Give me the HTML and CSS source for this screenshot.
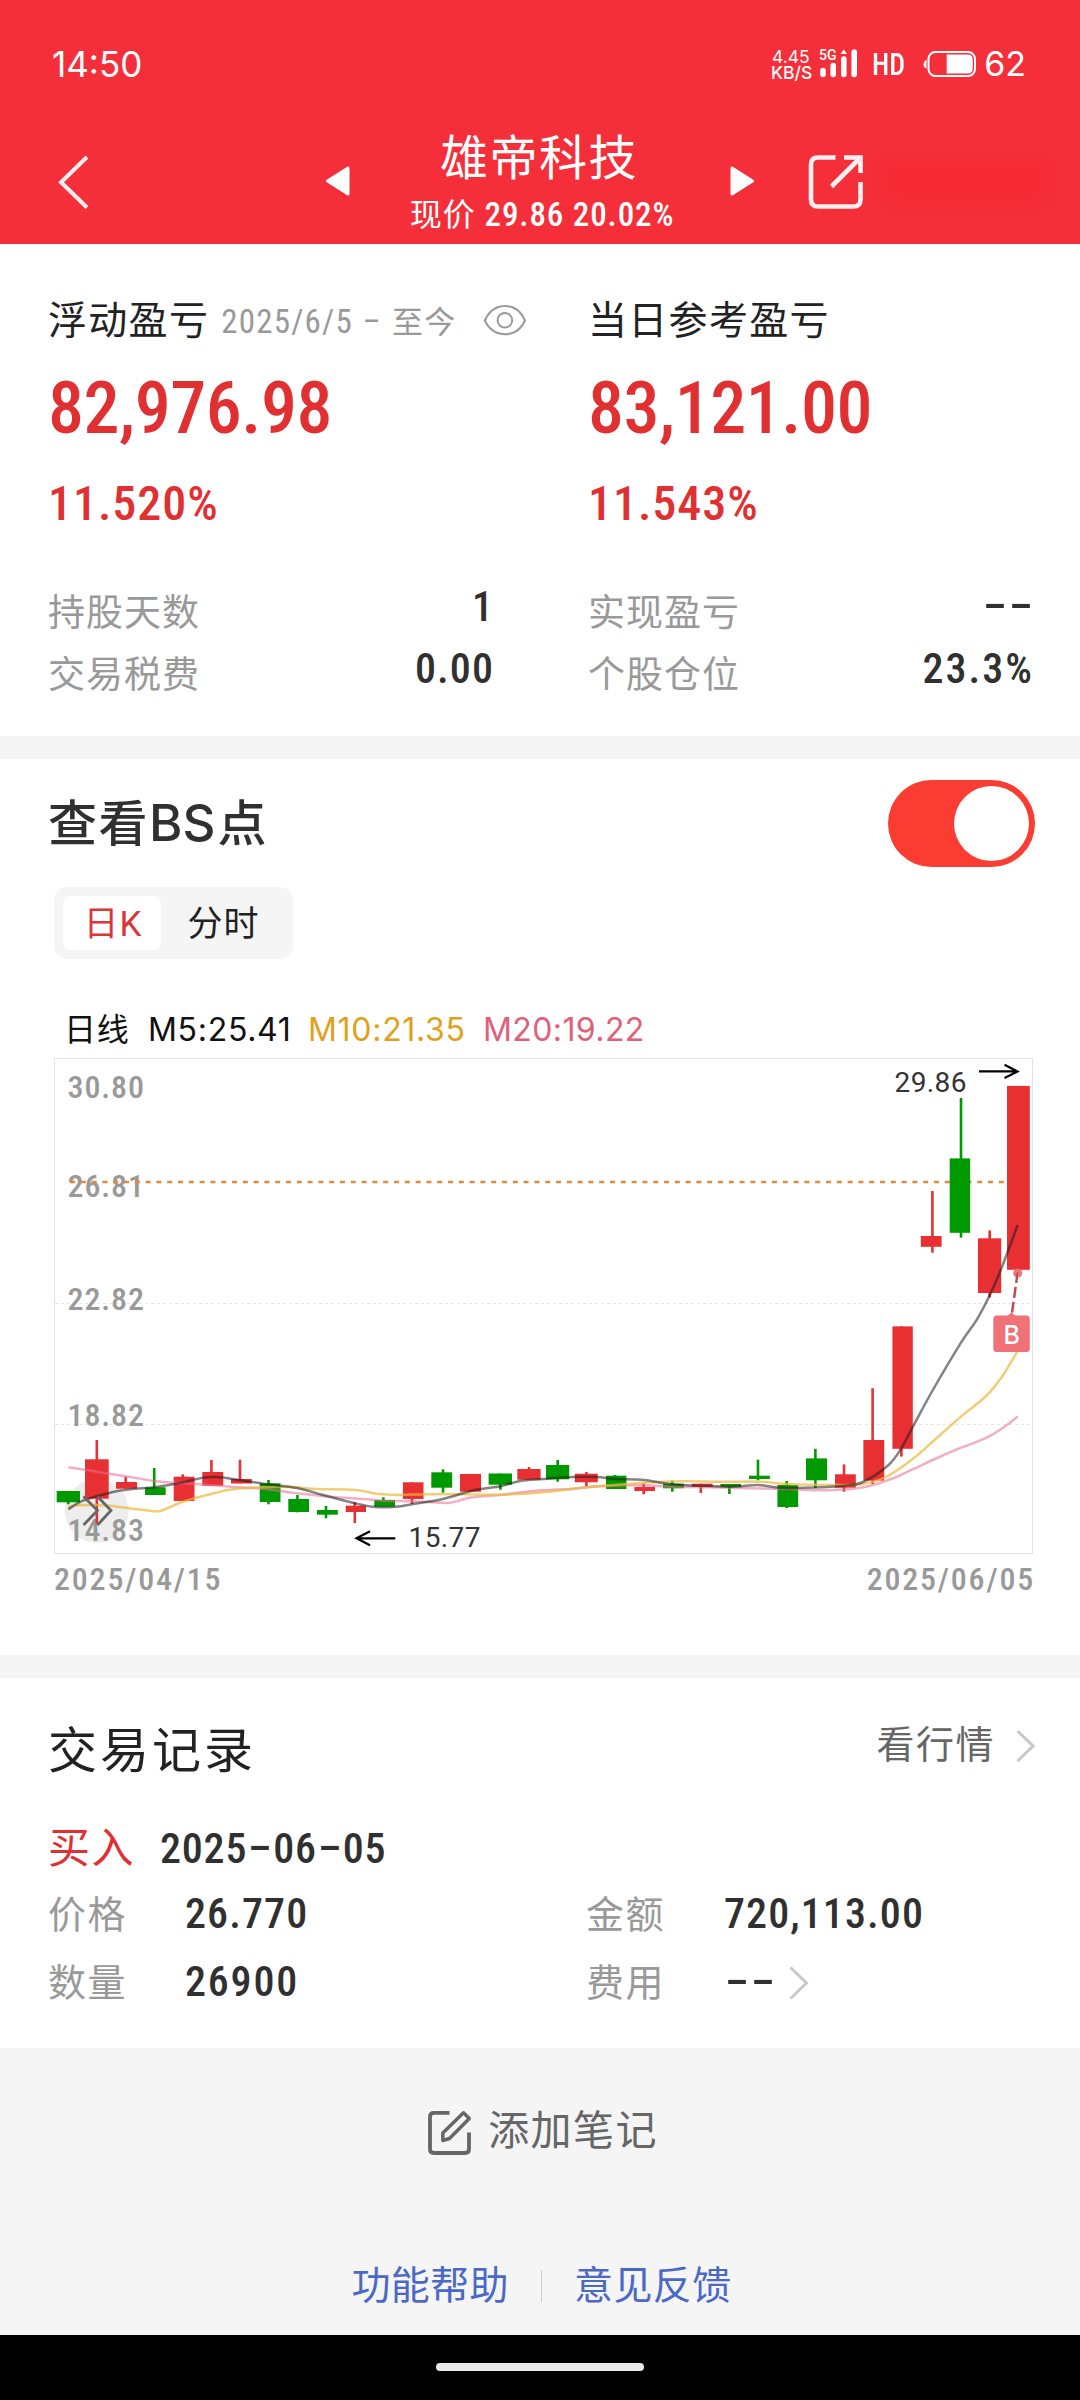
FILE: index.html
```
<!DOCTYPE html>
<html lang="zh-CN">
<head>
<meta charset="utf-8">
<title>雄帝科技</title>
<link rel="stylesheet" href="styles.css">
</head>
<body>
<header class="header">
  <div class="status">
    <span class="clock">14:50</span>
    <div class="status-icons">
      <div class="speed"><span>4.45</span><span class="unit">KB/S</span></div>
      <svg class="signal" width="40" height="32" viewBox="822 48 40 32">
        <text x="823" y="59.5" class="net">5G</text>
        <g stroke="#fff" stroke-width="5.6" stroke-linecap="round">
          <path d="M827 70.5v4M837.2 65.5v9M847.8 59v15.500M858.200 52v22.500"/>
        </g>
        <path d="M844.500 54l3.300-4.500 3.300 4.500z" fill="#fff"/>
      </svg>
      <span class="hd">HD</span>
      <svg class="battery" width="54" height="28" viewBox="925 49 54 28">
        <path d="M928.500 59.500v8q-3-1-3-4t3-5z" fill="#fff"/>
        <rect x="930.500" y="51" width="46.500" height="24" rx="7" fill="none" stroke="#fff" stroke-width="2"/>
        <path d="M948.700 53.500h21q5 0 5 5v9q0 5-5 5h-21z" fill="#fff"/>
      </svg>
      <span class="level">62</span>
    </div>
  </div>
  <nav class="nav">
    <svg class="back" width="32" height="56" viewBox="58 154 32 56"><path d="M87 157L61 182.200L87 207.500" fill="none" stroke="#fff" stroke-opacity=".92" stroke-width="4"/></svg>
    <svg class="arrow" width="24" height="30" viewBox="0 0 24 30"><path d="M1.500 15L22 2v26z" fill="#fff" stroke="#fff" stroke-width="3" stroke-linejoin="round"/></svg>
    <div class="heading">
      <h1>雄帝科技</h1>
      <p><span class="cap">现价</span> 29.86 20.02%</p>
    </div>
    <svg class="arrow" width="24" height="30" viewBox="0 0 24 30"><path d="M22.500 15L2 2v26z" fill="#fff" stroke="#fff" stroke-width="3" stroke-linejoin="round"/></svg>
    <svg class="share" width="56" height="56" viewBox="808 154 56 56"><g fill="none" stroke="#fff" stroke-opacity=".92" stroke-width="4.600">
      <path d="M835.500 157.500H818q-7 0-7 7V199.500q0 7 7 7H853.500q7 0 7-7V182"/>
      <path d="M844 157.500H860.500V173M860 158L831.500 186.500"/></g></svg>
    <span class="smudge"></span>
  </nav>
</header>

<section class="summary">
  <div class="col">
    <div class="label-row">
      <h2>浮动盈亏</h2>
      <span class="range">2025/6/5<span class="dash">-</span><span class="cap">至今</span></span>
      <svg class="eye" width="44" height="32" viewBox="483 303 44 32"><g fill="none" stroke="#999" stroke-width="2"><path d="M484.800 319.500Q489 310 497 306.500Q505 303.500 513 306.500Q521 310 525 319.500Q521 328.500 513 331.800Q505 334.500 497 331.800Q489 328.500 484.800 319.500Z"/><circle cx="504.900" cy="319.300" r="7.300"/></g></svg>
    </div>
    <div class="big">82,976.98</div>
    <div class="pct">11.520%</div>
    <dl class="kv">
      <dt>持股天数</dt><dd>1</dd>
      <dt>交易税费</dt><dd>0.00</dd>
    </dl>
  </div>
  <div class="col">
    <div class="label-row"><h2>当日参考盈亏</h2></div>
    <div class="big">83,121.00</div>
    <div class="pct">11.543%</div>
    <dl class="kv">
      <dt>实现盈亏</dt><dd><span class="dash">-</span><span class="dash">-</span></dd>
      <dt>个股仓位</dt><dd class="wide">23.3%</dd>
    </dl>
  </div>
</section>

<section class="chart-card">
  <div class="card-head">
    <h2>查看<span class="latin">BS</span>点</h2>
    <span class="toggle"><i></i></span>
  </div>
  <div class="tabs"><span class="tab active">日K</span><span class="tab">分时</span></div>
  <div class="legend"><span class="kind">日线</span><span class="m5">M5:25.41</span><span class="m10">M10:21.35</span><span class="m20">M20:19.22</span></div>
  <svg class="chart" width="980" height="497" viewBox="54 1058 980 497">
    <rect x="54.500" y="1058.500" width="978" height="495" fill="none" stroke="#e4e4e6"/>
    <path d="M55 1303.500H1032M55 1424.500H1032" stroke="#e6e6e6" stroke-dasharray="3 3"/>
    <circle cx="96.700" cy="1511" r="32" fill="#ededed"/>
    <g class="axis">
      <text x="67.500" y="1098">30.80</text><text x="67.500" y="1196.500">26.81</text><text x="67.500" y="1310">22.82</text><text x="67.500" y="1425.500">18.82</text><text x="67.500" y="1540.500">14.83</text>
    </g>
    <path d="M70 1182H1010" stroke="#dd8a3c" stroke-width="2.400" stroke-dasharray="5 5.800"/>
    <g id="candles"></g>
    <g fill="none" stroke-width="2.500">
      <path class="ma20" id="ma20"/>
      <path class="ma10" id="ma10"/>
      <path class="ma5" id="ma5"/>
    </g>
    <path d="M83.500 1496.500L97.500 1510.500L83.500 1525M97.500 1496.500L111 1510.500L97.500 1525" fill="none" stroke="#666" stroke-width="2.800"/>
    <g fill="none" stroke="#000" stroke-width="2.200">
      <path d="M979 1071.400H1017M1004.500 1064.800L1017.500 1071.400L1004.500 1078"/>
      <path d="M395.300 1538.300H357M370 1531.300L356.500 1538.300L370 1545.300"/>
    </g>
    <text class="mark" x="894.500" y="1092">29.86</text>
    <text class="mark" x="408.500" y="1546.500">15.77</text>
    <circle cx="1017.700" cy="1273" r="4.500" fill="#f07176"/>
    <path d="M1017.700 1272L1012 1313" stroke="#fff" stroke-width="2.500"/>
    <path d="M1017.700 1272L1012 1313" stroke="#c9474f" stroke-width="2.500" stroke-dasharray="11 4"/>
    <path d="M1006 1317l5.500-4.500 5.500 4.500z" fill="#f07176"/>
    <rect x="993.300" y="1315.600" width="36.500" height="36.400" rx="3.500" fill="#f07176"/>
    <text class="b-mark" x="1011.800" y="1343.500">B</text>
  </svg>
  <div class="dates"><span>2025/04/15</span><span>2025/06/05</span></div>
</section>

<section class="records">
  <div class="card-head">
    <h2>交易记录</h2>
    <a class="more">看行情<svg width="19" height="32" viewBox="0 0 19 32"><path d="M1.500 1L17 16L1.500 31" fill="none" stroke="#c8c8c8" stroke-width="3"/></svg></a>
  </div>
  <div class="trade"><span class="side">买入</span><span class="num day">2025<span class="dash">-</span>06<span class="dash">-</span>05</span></div>
  <div class="fields">
    <span class="name">价格</span><span class="num">26.770</span>
    <span class="name">金额</span><span class="num">720,113.00</span>
    <span class="name">数量</span><span class="num qty">26900</span>
    <span class="name">费用</span><span class="num fee"><span class="dash">-</span><span class="dash">-</span><svg width="20" height="34" viewBox="0 0 20 34"><path d="M1.500 1.500L17.500 17L1.500 32.500" fill="none" stroke="#c8c8c8" stroke-width="3"/></svg></span>
  </div>
</section>

<footer class="footer">
  <a class="note"><svg width="44" height="46" viewBox="428 2110 44 46"><g fill="none" stroke="#666" stroke-width="3.800"><path d="M449.500 2112.800H434q-4 0-4 4V2149q0 4 4 4H465q4 0 4-4V2132.500"/><path d="M442.800 2140.500V2133L463.500 2112.800L469.300 2118.500L449.500 2138.500Z" stroke-width="3.400" stroke-linejoin="round"/></g></svg>添加笔记</a>
  <div class="links"><a>功能帮助</a><i></i><a>意见反馈</a></div>
</footer>
<div class="gesture"><i></i></div>
<script src="chart.js"></script>
</body>
</html>
```
FILE: chart.js
```
// Each candle: body left, right, top, bottom, wick x, wick top, wick bottom, colour
const R = '#e83033', G = '#009a00';
const candles = [
  [56.7,80,1491,1502.3,68.3,1491,1504.3,G],[85,108.7,1459.3,1498.7,96.8,1440,1523.3,R],
  [116,137,1482,1488.7,125.7,1476.7,1488.7,R],[145,165.7,1487.3,1495,154.2,1468,1495,G],
  [173.7,194.5,1476.7,1501,182.8,1474.3,1501,R],[202.3,223.2,1472,1485.7,211.4,1460,1485.7,R],
  [231,251.8,1479,1483.5,240,1459.7,1483.5,R],[259.7,280.5,1483.3,1502,268.5,1480,1504.3,G],
  [288.3,309,1499,1512,297.4,1495,1512.3,G],[317,337.8,1510,1514.7,326,1506,1518.3,G],
  [345.7,366,1505.7,1512,354.8,1502.3,1523,R],[374.3,395,1500,1506.7,383.4,1497.3,1506.7,G],
  [402.9,423.5,1482.3,1499,412,1482.3,1504,R],[431.3,452.2,1472.3,1487.7,443,1469.3,1492.7,G],
  [460,481,1474,1491.7,470,1474,1491.7,R],[488.6,512,1473.5,1484.7,500.4,1473.5,1489.7,G],
  [517.3,540.6,1469,1479.7,529,1467,1479.7,R],[546,569.2,1465,1479.3,557.7,1460,1481.7,G],
  [574.8,597.8,1473.7,1482.3,586.4,1472,1486,R],[606,626.4,1475.7,1489,615,1475,1489,G],
  [634.4,655,1487,1491,643.7,1483.3,1494.3,R],[663,683.8,1483.7,1488.3,672.3,1480.7,1491.7,G],
  [691.8,712.6,1483.7,1487,700.8,1483.7,1493,R],[720.4,741,1484,1487,729.4,1484,1494,G],
  [749,769.8,1475.7,1479,758,1459.7,1480.3,G],[777.4,798.2,1485,1507,786.7,1481,1508,G],
  [806,827,1458.4,1480.3,815.4,1448.8,1488,G],[835,855.8,1474.3,1487.7,844,1464.4,1491.7,R],
  [863.4,884.2,1440,1480.6,872.6,1388.2,1484,R],[892.4,912.8,1326.4,1448.8,901.4,1326.4,1456.6,R],
  [920.8,941.6,1236,1246.8,932.4,1191,1252.7,R],[949.7,970.2,1158.4,1232.8,961,1098,1237.6,G],
  [978,1001.2,1238.3,1293,989.7,1230.5,1297.5,R],[1007,1029.8,1085.9,1269.8,1017.7,1085.9,1273,R]
];
document.getElementById('candles').innerHTML = candles.map(([l, r, t, b, x, wt, wb, c]) =>
  `<rect x="${l}" y="${t}" width="${r - l}" height="${b - t}" fill="${c}"/><path d="M${x} ${wt}V${wb}" stroke="${c}" stroke-width="2.6"/>`).join('');

// Moving averages, smoothed with Catmull-Rom segments
const averages = {
  ma5: [[68.3,1509.3],[83,1500.7],[110,1492.7],[130,1489.3],[154,1487.3],[173,1484.3],[190,1480.7],[203,1477.7],[217,1477],[237,1479.7],[263,1483.7],[280,1485.7],[300,1488.7],[323,1495],[355,1503.3],[373,1506.7],[393,1507],[412,1504.3],[443,1499],[472,1490.7],[500,1486.3],[520,1481],[543,1479],[573,1477],[597,1477],[615,1479],[644,1480],[672,1484.3],[701,1485.7],[733,1486.7],[758,1485],[780,1487.7],[815,1487.6],[844,1485.8],[863,1482],[888,1465.5],[901,1448.8],[913,1426.6],[932,1391.5],[961,1342.6],[977,1319.3],[989.7,1295.3],[1001,1269.4],[1017.7,1225]],
  ma10: [[68.3,1506.7],[80,1505.3],[103,1505.3],[127,1508],[154,1511.3],[163,1510],[183,1501.7],[211,1494],[233,1489.3],[263,1487.3],[290,1487],[317,1489],[355,1490],[377,1493.7],[397,1495],[412,1494.6],[443,1494],[500,1494.7],[543,1492.3],[587,1487.3],[615,1485],[653,1482.3],[683,1481.3],[720,1481.7],[760,1481.7],[787,1484],[844,1485],[863,1484],[887,1476.5],[913,1458.8],[937,1437.7],[961,1416.6],[985,1397],[1002,1376.7],[1017.7,1350.8]],
  ma20: [[68.3,1467.3],[97,1471.7],[130,1477],[163,1482],[197,1484],[230,1486.7],[263,1488.7],[297,1493.3],[330,1496.7],[363,1499],[383,1500.7],[412,1501.3],[430,1502],[450,1502.7],[472,1497.3],[500,1495],[533,1491],[573,1488.7],[600,1486.3],[644,1485.3],[672,1486.7],[729,1487.7],[787,1489.1],[815,1490.2],[844,1489.5],[867,1486.5],[890,1479.5],[913,1469.2],[937,1458],[961,1447.7],[985,1438.4],[1002,1428.5],[1017.7,1416.6]]
};
for (const [id, p] of Object.entries(averages)) {
  let d = `M${p[0]}`;
  for (let i = 0; i < p.length - 1; i++) {
    const a = p[i - 1] || p[i], b = p[i], c = p[i + 1], e = p[i + 2] || c;
    d += `C${b[0] + (c[0] - a[0]) / 6} ${b[1] + (c[1] - a[1]) / 6} ${c[0] - (e[0] - b[0]) / 6} ${c[1] - (e[1] - b[1]) / 6} ${c[0]} ${c[1]}`;
  }
  document.getElementById(id).setAttribute('d', d);
}
```
FILE: styles.css
```
* { box-sizing: border-box; margin: 0; padding: 0; }
body { width: 1080px; background: #fff; color: #222; font-family: Roboto, "Noto Sans CJK SC", sans-serif; }
h1, h2 { font-weight: 400; }
i { display: block; }
svg { display: block; flex: none; }

.header { height: 244px; background: #f42f39; color: #fff; }
.status { display: flex; justify-content: space-between; height: 129px; padding: 44px 54px 0 52px; }
.clock, .level, .speed { font-family: Inter, sans-serif; }
.clock { font-size: 35px; line-height: 40px; }
.status-icons { display: flex; height: 40px; align-items: center; width: 255px; }
.speed { display: flex; flex-direction: column; width: 52px; padding: 1px 0 0 1px; font-size: 17.5px; line-height: 15.5px; }
.speed .unit { margin-left: -1px; font-size: 17.5px; font-weight: 500; }
.net { font: 500 14px Roboto, sans-serif; fill: #fff; }
.hd { width: 31px; margin-left: 14px; font-size: 32px; line-height: 40px; font-weight: 500; font-stretch: 75%; transform: scaleX(.87); transform-origin: 0 50%; white-space: nowrap; }
.battery { margin-left: 20px; }
.level { margin-left: 7px; font-size: 34px; line-height: 40px; }

.nav { display: grid; grid-template-columns: 268px 24px 380px 24px 56px 1fr; height: 115px; padding-left: 58px; align-items: start; }
.back { margin-top: 25px; }
.arrow { margin-top: 37px; }
.share { margin: 25px 0 0 54px; }
.heading { text-align: center; }
.heading h1 { font-size: 48px; line-height: 60px; letter-spacing: 1.5px; padding-right: 2px; }
.heading p { margin-top: 6px; padding-left: 4px; font-size: 33px; line-height: 40px; font-weight: 500; font-stretch: 75%; letter-spacing: .9px; }
.heading .cap { font-weight: 400; font-size: 32px; line-height: 1; letter-spacing: 1.2px; }
.smudge { width: 165px; height: 38px; margin: 34px 0 0 72px; border-radius: 19px; background: #f8222e; opacity: .45; filter: blur(8px); }

.summary { display: grid; grid-template-columns: 540px 540px; height: 492px; padding-top: 52px; }
.col { padding-left: 48px; }
.label-row { display: flex; align-items: center; width: 479px; height: 50px; }
.label-row h2 { font-size: 39px; line-height: 50px; letter-spacing: 1.3px; }
.range { margin: 2px 0 0 12px; color: #999; font-size: 33px; line-height: 50px; font-stretch: 75%; letter-spacing: 1.2px; white-space: nowrap; }
.range .dash { width: 21px; margin: 0 10px 0 8px; }
.range .cap { font-size: 31px; line-height: 1; }
.eye { margin: -3px 0 0 auto; }
.big { margin-top: 23px; color: #e03032; font-size: 72px; line-height: 80px; font-weight: 500; font-stretch: 75%; letter-spacing: -.45px; }
.pct { margin-top: 25px; color: #e03032; font-size: 48px; line-height: 60px; font-weight: 500; font-stretch: 75%; letter-spacing: 1px; }
.dash { display: inline-block; width: 26px; text-align: center; letter-spacing: 0; transform: translateY(-2px) scaleX(1.9); }
.kv { display: grid; grid-template-columns: 1fr auto; width: 446px; margin-top: 49px; grid-auto-rows: 62px; line-height: 62px; }
.kv dt { color: #999; font-size: 37px; letter-spacing: 1px; }
.kv dd, .num { color: #303030; font-size: 42px; font-weight: 500; font-stretch: 75%; letter-spacing: 1.1px; }
.kv dd { margin-top: -7px; text-align: right; }
.kv dd.wide { letter-spacing: 2px; }

.chart-card { height: 919px; border-top: 23px solid #f5f5f5; padding: 21px 45px 0 48px; }
.card-head { display: flex; justify-content: space-between; }
.chart-card .card-head { height: 87px; }
.chart-card h2 { color: #303030; font-size: 49px; line-height: 90px; font-weight: 500; letter-spacing: 1.5px; }
.latin { padding-right: 2px; font-family: Inter, sans-serif; font-size: 51px; line-height: 1; letter-spacing: 0; }
.toggle { width: 147px; height: 87px; padding: 6px; border-radius: 44px; background: #fb3c32; }
.toggle i { width: 75px; height: 75px; margin-left: auto; border-radius: 50%; background: #fff; }
.tabs { display: flex; width: 239px; height: 72px; margin: 20px 0 0 6px; padding: 9px; border-radius: 13px; background: #f5f5f5; }
.tab { width: 99px; height: 54px; border-radius: 8px; font-size: 35px; line-height: 58px; letter-spacing: 1px; text-align: center; }
.tab + .tab { width: 124px; padding-left: 2px; }
.tab.active { padding-left: 2px; background: #fff; color: #d9363a; }
.legend { display: flex; height: 40px; margin: 50px 0 0 16px; font-family: Inter, "Noto Sans CJK SC", sans-serif; font-size: 32px; line-height: 42px; letter-spacing: .7px; color: #111; white-space: nowrap; }
.legend .kind { width: 84px; }
.legend .m5 { width: 160px; }
.legend .m10 { width: 175px; color: #dfa11c; }
.legend .m20 { color: #e0607c; letter-spacing: .4px; }
.chart { margin: 9px 0 0 6px; }
.axis { font: 500 32px Roboto, sans-serif; font-stretch: 75%; letter-spacing: .9px; fill: #999; }
.mark { font: 400 28px Roboto, sans-serif; letter-spacing: .4px; fill: #333; }
.b-mark { font: 500 25px Inter, sans-serif; fill: #fff; text-anchor: middle; }
.ma5 { stroke: rgba(30, 30, 30, .55); }
.ma10 { stroke: rgba(236, 184, 60, .7); }
.ma20 { stroke: rgba(232, 110, 145, .55); }
.dates { display: flex; justify-content: space-between; margin: 9px 0 0 6px; color: #999; font-size: 32px; line-height: 30px; font-weight: 500; font-stretch: 75%; letter-spacing: 1.8px; }

.records { height: 393px; border-top: 23px solid #f5f5f5; padding: 44px 45px 0 48px; }
.records h2 { font-size: 49px; line-height: 60px; letter-spacing: 3px; }
.more { display: flex; align-items: center; height: 46px; color: #666; font-size: 38px; line-height: 46px; letter-spacing: 1.5px; }
.more svg { margin: 2px 0 0 21px; }
.trade { display: flex; height: 50px; margin-top: 42px; line-height: 50px; }
.side { width: 112px; color: #e03032; font-size: 42px; letter-spacing: 1.5px; }
.day { letter-spacing: .8px; }
.fields { display: grid; grid-template-columns: 137px 401px 138px 1fr; grid-auto-rows: 50px; row-gap: 18px; margin-top: 16px; line-height: 50px; }
.name { color: #999; font-size: 38px; letter-spacing: 1.5px; }
.fields .num { margin-top: -1px; }
.fields .qty { letter-spacing: 1.8px; }
.fee { display: flex; align-items: center; }
.fee svg { margin: 0 0 0 13px; }

.footer { height: 287px; background: #f5f5f5; padding-top: 53px; }
.note { display: flex; justify-content: center; align-items: center; height: 60px; padding-left: 6px; color: #666; font-size: 41px; line-height: 60px; letter-spacing: 1.4px; }
.note svg { margin: 3px 16px 0 0; }
.links { display: flex; justify-content: center; align-items: center; height: 50px; margin-top: 100px; padding-left: 3px; color: #4a69c6; font-size: 39px; line-height: 50px; letter-spacing: .4px; }
.links i { width: 1px; height: 32px; margin: 0 32px; background: #ccc; }
.gesture { height: 65px; padding-top: 28px; background: #000; }
.gesture i { width: 208px; height: 8px; margin: 0 auto; border-radius: 4px; background: #ebe9ea; }
```
